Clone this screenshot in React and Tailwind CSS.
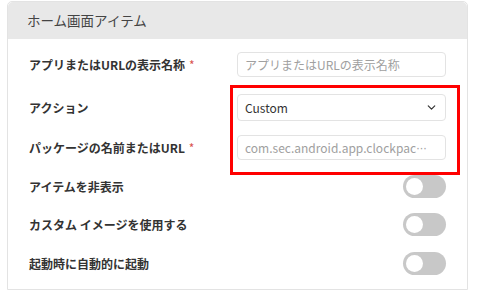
import React from 'react';
import { ChevronDown } from 'lucide-react';

const font = { fontFamily: '"Noto Sans CJK JP", "Noto Sans", sans-serif' };

const Label = ({ children, required }) => (
    <div className="flex-1 text-[12px] font-bold text-[#333] leading-none whitespace-nowrap">
        {children}
        {required && <span className="ml-[4px] text-[#d9534f] font-normal">*</span>}
    </div>
);

const Toggle = () => (
    <div className="w-[43px] h-[23px] rounded-full bg-[#c8c8c8] flex items-center px-[3px] shrink-0">
        <div className="w-[17px] h-[17px] rounded-full bg-white" />
    </div>
);

export default function App() {
    return (
        <div className="w-[479px] h-[293px] bg-white overflow-hidden pt-px pl-[7px] pr-[11px]" style={font}>
            <div className="relative border border-[#e3e3e3] rounded-t-[5px]">
                {/* Header */}
                <div className="h-[37px] bg-[#e8e8e8] rounded-t-[5px] flex items-center pl-[19px]">
                    <span className="text-[13.5px] text-[#444]">ホーム画面アイテム</span>
                </div>

                {/* Body */}
                <div className="pl-[21px] pr-[21px] pt-[13px] pb-[14px] flex flex-col">
                    <div className="flex items-center h-[25px]">
                        <Label required>アプリまたはURLの表示名称</Label>
                        <div className="w-[209px] h-[25px] border border-[#e3e3e3] rounded-[4px] flex items-center px-[7px] text-[12px] text-[#a0a0a0] whitespace-nowrap overflow-hidden">
                            アプリまたはURLの表示名称
                        </div>
                    </div>

                    <div className="flex items-center h-[27px] mt-[17px]">
                        <Label>アクション</Label>
                        <div className="w-[209px] h-[27px] border border-[#e3e3e3] rounded-[4px] flex items-center justify-between pl-[7px] pr-[7px] text-[12px] text-[#333]">
                            <span>Custom</span>
                            <ChevronDown size={13} strokeWidth={2.2} className="text-[#333]" />
                        </div>
                    </div>

                    <div className="flex items-center h-[25px] mt-[14px]">
                        <Label required>パッケージの名前またはURL</Label>
                        <div className="w-[209px] h-[25px] border border-[#e3e3e3] rounded-[4px] flex items-center px-[7px] text-[12px] text-[#a0a0a0] whitespace-nowrap overflow-hidden">
                            com.sec.android.app.clockpac<span className="font-['Liberation_Sans'] tracking-[-0.5px]">···</span>
                        </div>
                    </div>

                    <div className="flex items-center h-[23px] mt-[15px]">
                        <Label>アイテムを非表示</Label>
                        <Toggle />
                    </div>

                    <div className="flex items-center h-[23px] mt-[15px]">
                        <Label>カスタム イメージを使用する</Label>
                        <Toggle />
                    </div>

                    <div className="flex items-center h-[23px] mt-[16px]">
                        <Label>起動時に自動的に起動</Label>
                        <Toggle />
                    </div>
                </div>

                {/* annotation highlight */}
                <div className="absolute left-[222px] top-[83px] w-[230px] h-[90px] border-[3px] border-[#ff0000] pointer-events-none" />
            </div>
        </div>
    );
}
